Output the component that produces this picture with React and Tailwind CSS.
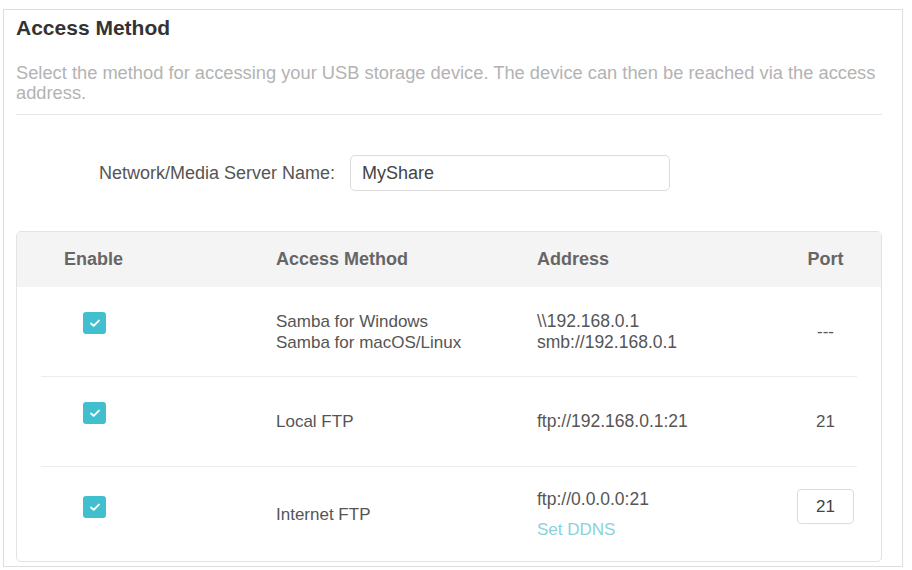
import React from "react";

const rows = [
    {
        methods: ["Samba for Windows", "Samba for macOS/Linux"],
        addresses: ["\\\\192.168.0.1", "smb://192.168.0.1"],
        port: "---",
    },
    {
        methods: ["Local FTP"],
        addresses: ["ftp://192.168.0.1:21"],
        port: "21",
    },
    {
        methods: ["Internet FTP"],
        addresses: ["ftp://0.0.0.0:21"],
        port: "21",
        editablePort: true,
        ddns: true,
    },
];

function Checkbox() {
    return (
        <span className="flex h-[22px] w-[23px] items-center justify-center rounded-[3px] bg-[#42bfce]">
            <svg viewBox="0 0 16 16" className="h-[14px] w-[14px]" fill="none">
                <path d="M3.5 8.5l3 2.8 6-6" stroke="white" strokeWidth="2.2" strokeLinecap="round" strokeLinejoin="round" />
            </svg>
        </span>
    );
}

function Row({ row, last, checkTop }) {
    return (
        <div
            className={`grid grid-cols-[235px_261px_257px_1fr] items-center ${
                last ? "h-[94px]" : "h-[90px] border-b border-[#ececec]"
            }`}
        >
            <div className="self-start pl-[42px]" style={{ paddingTop: checkTop }}>
                <Checkbox />
            </div>
            <div className="flex flex-col leading-[21px]">
                {row.methods.map((m) => (
                    <span key={m}>{m}</span>
                ))}
            </div>
            <div className="flex flex-col text-[17.5px] leading-[21px]">
                {row.addresses.map((a) => (
                    <span key={a}>{a}</span>
                ))}
                {row.ddns && <span className="mt-[9px] text-[17px] text-[#8ad2dc]">Set DDNS</span>}
            </div>
            <div className="flex justify-center">
                {row.editablePort ? (
                    <div className="mb-[15px] flex h-[35px] w-[57px] items-center justify-center rounded-[4px] border border-[#dcdcdc] text-[#444]">
                        {row.port}
                    </div>
                ) : (
                    <span>{row.port}</span>
                )}
            </div>
        </div>
    );
}

export default function App() {
    return (
        <div className="h-[570px] w-[912px] bg-white pl-[3px] pt-[9px] font-['Liberation_Sans',Arial,sans-serif]">
            <section className="h-[558px] w-[900px] border border-[#dedede] px-[12px]">
                <h1 className="pt-[6px] text-[21px] font-bold leading-[24px] text-[#333]">
                    Access Method
                </h1>
                <p className="mt-[23px] w-[870px] text-[18.3px] leading-[20px] text-[#b3b3b3]">
                    Select the method for accessing your USB storage device. The device can then be reached via the access address.
                </p>
                <div className="mt-[11px] w-[866px] border-t border-[#e6e6e6]" />

                <div className="mt-[40px] flex items-center">
                    <label className="w-[334px] pr-[15px] text-right text-[18px] text-[#555]">
                        Network/Media Server Name:
                    </label>
                    <div className="flex h-[36px] w-[320px] items-center rounded-[5px] border border-[#dcdcdc] px-[11px] text-[18px] text-[#444]">
                        MyShare
                    </div>
                </div>

                <div className="mt-[40px] w-[866px] overflow-hidden rounded-[5px] border border-[#e3e3e3] text-[17px] text-[#555]">
                    <div className="bg-[#f4f4f4]">
                        <div className="mx-[24px] grid h-[55px] grid-cols-[235px_261px_257px_1fr] items-center text-[18px] font-bold text-[#666]">
                            <span className="pl-[23px]">Enable</span>
                            <span>Access Method</span>
                            <span>Address</span>
                            <span className="text-center">Port</span>
                        </div>
                    </div>
                    <div className="mx-[24px]">
                        {rows.map((r, i) => (
                            <Row
                                key={i}
                                row={r}
                                last={i === rows.length - 1}
                                checkTop={[25, 25, 29][i]}
                            />
                        ))}
                    </div>
                </div>
            </section>
        </div>
    );
}
